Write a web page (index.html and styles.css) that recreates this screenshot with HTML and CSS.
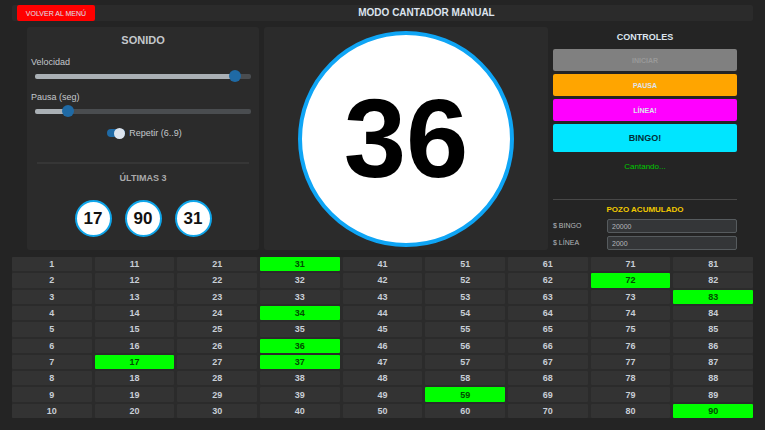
FILE: index.html
```html
<!DOCTYPE html>
<html lang="es">
<head>
    <meta charset="UTF-8">
    <meta name="viewport" content="width=device-width, initial-scale=1.0">
    <title>Modo Cantador Manual</title>
    <link rel="stylesheet" href="styles.css">
</head>
<body>
    <header class="topbar">
        <button type="button" class="btn-back">VOLVER AL MENÚ</button>
        <h1>MODO CANTADOR MANUAL</h1>
    </header>

    <main class="panels">
        <section class="panel sound">
            <h2>SONIDO</h2>
            <div class="slider-group">
                <label for="speed">Velocidad</label>
                <input type="range" id="speed" min="0" max="100" value="95" style="--value: 95%">
            </div>
            <div class="slider-group">
                <label for="pause">Pausa (seg)</label>
                <input type="range" id="pause" min="0" max="100" value="13" style="--value: 13%">
            </div>
            <label class="switch">
                <input type="checkbox" checked>
                Repetir (6..9)
            </label>
            <hr>
            <h3>ÚLTIMAS 3</h3>
            <div class="last-balls">
                <span class="ball">17</span>
                <span class="ball">90</span>
                <span class="ball">31</span>
            </div>
        </section>

        <section class="panel stage">
            <div class="big-ball">36</div>
        </section>

        <section class="controls">
            <h2>CONTROLES</h2>
            <div class="buttons">
                <button type="button" class="btn btn-start" disabled>INICIAR</button>
                <button type="button" class="btn btn-pause">PAUSA</button>
                <button type="button" class="btn btn-line">LÍNEA!</button>
                <button type="button" class="btn btn-bingo">BINGO!</button>
            </div>
            <p class="status">Cantando...</p>
            <div class="pot">
                <h3>POZO ACUMULADO</h3>
                <div class="field">
                    <label for="pot-bingo">$ BINGO</label>
                    <input type="text" id="pot-bingo" value="20000">
                </div>
                <div class="field">
                    <label for="pot-line">$ LÍNEA</label>
                    <input type="text" id="pot-line" value="2000">
                </div>
            </div>
        </section>
    </main>

    <div class="board" id="board"></div>

    <script>
        const called = [17, 31, 34, 36, 37, 59, 72, 83, 90];
        const board = document.getElementById('board');

        for (let n = 1; n <= 90; n++) {
            const cell = document.createElement('div');
            cell.className = called.includes(n) ? 'cell called' : 'cell';
            cell.innerText = n;
            board.appendChild(cell);
        }

        // Keep the filled part of the track in step with the thumb
        document.querySelectorAll('input[type="range"]').forEach(function(slider) {
            slider.addEventListener('input', function() {
                slider.style.setProperty('--value', slider.value + '%');
            });
        });
    </script>
</body>
</html>
```
FILE: styles.css
```css
* {
    box-sizing: border-box;
}

body {
    font-family: Arial, "Liberation Sans", sans-serif;
    font-size: 9px;
    line-height: 12px;
    background-color: #242424;
    color: #dce4ee;
    margin: 0;
    padding: 5px 12px 12px;
    display: flex;
    flex-direction: column;
    min-height: 100vh;
}

h1, h2, h3, p {
    margin: 0;
}

button, input {
    font-family: inherit;
    margin: 0;
}

button {
    border: none;
    border-radius: 2px;
    cursor: pointer;
}

.topbar {
    display: flex;
    align-items: center;
    gap: 5px;
    background-color: #2b2b2b;
    border-radius: 2px;
    padding-left: 5px;
    margin-bottom: 6px;
}

.topbar h1 {
    flex: 1;
    text-align: center;
    font-size: 10px;
}

.btn-back {
    width: 78px;
    height: 16px;
    padding: 0;
    background-color: #ff0000;
    color: #dce4ee;
    font-size: 7px;
}

.panels {
    display: grid;
    grid-template-columns: 232fr 284fr 184fr;
    gap: 5px;
    padding: 0 16px 0 15px;
    margin-bottom: 7px;
}

.panel {
    background-color: #2b2b2b;
    border-radius: 3px;
}

/* Sound */
.sound {
    padding: 6px 4px 13px;
    color: #c4c8cc;
}

.sound h2 {
    font-size: 11px;
    line-height: 14px;
    text-align: center;
}

.slider-group {
    margin-top: 9px;
}

.slider-group label {
    display: block;
    margin-bottom: 2px;
}

input[type="range"] {
    appearance: none;
    display: block;
    width: calc(100% - 8px);
    height: 12px;
    margin: 0 4px;
    background: none;
}

input[type="range"]::-webkit-slider-runnable-track {
    height: 5px;
    border-radius: 2px;
    background: linear-gradient(to right, #aab0b5 var(--value), #4a4d50 var(--value));
}

input[type="range"]::-webkit-slider-thumb {
    appearance: none;
    width: 12px;
    height: 12px;
    margin-top: -4px;
    border-radius: 50%;
    background-color: #1f6aa5;
}

.switch {
    display: flex;
    justify-content: center;
    align-items: center;
    gap: 4px;
    margin-top: 10px;
    padding-left: 3px;
}

.switch input {
    appearance: none;
    display: flex;
    justify-content: flex-end;
    align-items: center;
    width: 18px;
    height: 8px;
    border-radius: 4px;
    background-color: #1f6aa5;
}

.switch input::before {
    content: "";
    flex: none;
    width: 11px;
    height: 11px;
    border-radius: 50%;
    background-color: #dce4ee;
}

.switch input:not(:checked) {
    justify-content: flex-start;
    background-color: #4a4d50;
}

.sound hr {
    border: none;
    height: 2px;
    background-color: #363636;
    margin: 23px 6px 8px;
}

.sound h3 {
    font-size: 9px;
    text-align: center;
    color: #aaaaaa;
}

.last-balls {
    display: flex;
    justify-content: center;
    gap: 13px;
    margin-top: 16px;
}

.ball {
    display: flex;
    justify-content: center;
    align-items: center;
    width: 37px;
    height: 37px;
    border: 2px solid #0fa5e9;
    border-radius: 50%;
    background-color: white;
    color: #111;
    font-size: 17px;
    font-weight: bold;
}

/* Current number */
.stage {
    display: flex;
    justify-content: center;
    align-items: center;
}

.big-ball {
    display: flex;
    justify-content: center;
    align-items: center;
    width: 216px;
    height: 216px;
    border: 4px solid #0fa5f5;
    border-radius: 50%;
    background-color: white;
    color: black;
    font-size: 112px;
    font-weight: bold;
}

/* Controls */
.controls {
    display: flex;
    flex-direction: column;
    padding-top: 4px;
    text-align: center;
}

.controls h2 {
    font-size: 9px;
}

.buttons {
    display: grid;
    gap: 3px;
    margin-top: 6px;
}

.btn {
    height: 22px;
    padding: 0;
    color: #dce4ee;
    font-size: 7px;
    font-weight: bold;
}

.btn-start {
    background-color: #808080;
    color: #999999;
    cursor: default;
}

.btn-pause {
    background-color: #ffa500;
}

.btn-line {
    background-color: #ff00ff;
}

.btn-bingo {
    height: 28px;
    background-color: #00e5ff;
    color: #003038;
    font-size: 9px;
}

.status {
    margin-top: 9px;
    color: #00c800;
    font-size: 8px;
}

.pot {
    margin-top: auto;
    border-top: 1px solid #484848;
    padding-top: 4px;
}

.pot h3 {
    font-size: 8px;
    color: #f0c800;
    margin-bottom: 3px;
}

.field {
    display: flex;
    align-items: center;
    font-size: 7px;
    color: #b4b8bc;
}

.field + .field {
    margin-top: 3px;
}

.field label {
    width: 54px;
    text-align: left;
}

.field input {
    flex: 1;
    min-width: 0;
    height: 14px;
    padding: 0 4px;
    border: 1px solid #565b5e;
    border-radius: 2px;
    background-color: #343638;
    color: #b4b8bc;
    font-size: 7px;
}

/* Number board, filled column by column */
.board {
    flex: 1;
    display: grid;
    grid-auto-flow: column;
    grid-template-rows: repeat(10, 1fr);
    grid-auto-columns: 1fr;
    gap: 2px 3px;
    background-color: #2b2b2b;
    font-weight: bold;
    color: #c8ced6;
}

.cell {
    display: flex;
    justify-content: center;
    align-items: center;
    background-color: #333333;
    border-radius: 1px;
}

.called {
    background-color: #00ff00;
    color: #004d00;
}
```
